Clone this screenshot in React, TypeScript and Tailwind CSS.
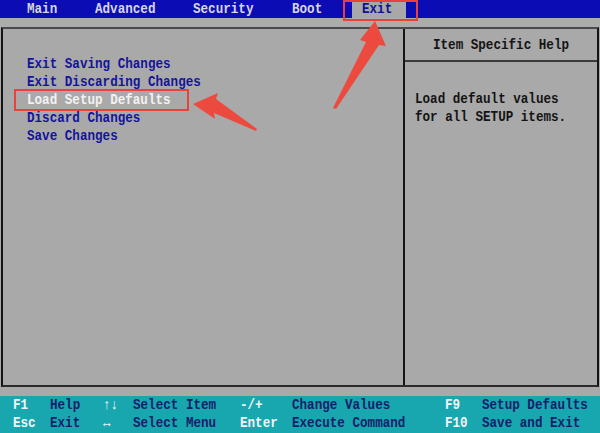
const mono = { fontFamily: '"Liberation Mono", "DejaVu Sans Mono", monospace' }

function T({ children, className = '' }: { children: React.ReactNode; className?: string }) {
    return <span className={`inline-block origin-center scale-y-[1.15] whitespace-pre ${className}`}>{children}</span>
}

const tabs = [
    { label: 'Main', w: 'w-[68px]' },
    { label: 'Advanced', w: 'w-[98px]' },
    { label: 'Security', w: 'w-[99px]' },
    { label: 'Boot', w: 'w-[60px]' },
]

const items = ['Exit Saving Changes', 'Exit Discarding Changes', 'Load Setup Defaults', 'Discard Changes', 'Save Changes']

const keys = [
    ['F1', 'Help', '↑↓', 'Select Item', '-/+', 'Change Values', 'F9', 'Setup Defaults'],
    ['Esc', 'Exit', '↔', 'Select Menu', 'Enter', 'Execute Command', 'F10', 'Save and Exit'],
]

export default function App() {
    return (
        <div className="relative w-[600px] h-[433px] bg-[#a9a9a9] flex flex-col overflow-hidden font-bold text-[12.6px] leading-[18px]" style={mono}>
            {/* menu bar */}
            <div className="h-[18px] shrink-0 bg-[#0c0cb4] flex items-stretch pl-[27px] text-[#d6d6e6]">
                {tabs.map((t) => (
                    <div key={t.label} className={`${t.w} shrink-0 flex items-center pt-[2px]`}><T>{t.label}</T></div>
                ))}
                <div className="shrink-0 bg-[#a8a8a8] pl-[10px] pr-[14px] text-[#101090] flex items-center pt-[2px]"><T>Exit</T></div>
            </div>

            <div className="h-[9px] shrink-0 bg-[#acacac]" />

            {/* main frame */}
            <div className="mx-[1px] h-[360px] shrink-0 flex border-t-2 border-t-[#4a4a4a] border-x-2 border-x-[#151515] border-b-2 border-b-[#2a2a2a]">
                <div className="w-[400px] pt-[27px] pl-[24px] flex flex-col text-[#14149a]">
                    {items.map((it) => (
                        <div key={it} className={it === 'Load Setup Defaults' ? 'text-[#f2f2f2]' : ''}><T>{it}</T></div>
                    ))}
                </div>
                <div className="w-[2px] bg-[#151515]" />
                <div className="flex-1 flex flex-col text-[#141414]">
                    <div className="h-[33px] flex items-center justify-center border-b-2 border-[#3a3a3a] pt-[3px]">
                        <T>Item Specific Help</T>
                    </div>
                    <div className="pt-[29px] pl-[10px] flex flex-col">
                        <T>Load default values</T>
                        <T>for all SETUP items.</T>
                    </div>
                </div>
            </div>

            <div className="flex-1" />

            {/* key help bar */}
            <div className="h-[37px] shrink-0 bg-[#18a7af] pl-[13px] pt-[1px] flex flex-col justify-center">
                {keys.map((row, i) => (
                    <div key={i} className="grid grid-cols-[37px_53px_30px_107px_52px_153px_37px_1fr]">
                        {row.map((c, j) => (
                            <div key={j} className={j % 2 === 0 ? 'text-[#f4f4f4]' : 'text-[#13206a]'}><T>{c}</T></div>
                        ))}
                    </div>
                ))}
            </div>

            {/* red annotations */}
            <div className="absolute left-[343px] top-0 w-[75px] h-[21px] border-2 border-[#e8433a]" />
            <div className="absolute left-[14px] top-[89px] w-[175px] h-[22px] border-2 border-[#e8433a]" />
            <svg className="absolute inset-0 pointer-events-none" width="600" height="433" viewBox="0 0 600 433">
                <polygon points="333,108 366,42 360,40 375,21 386,46 379,45 336,109" fill="#ec4a3e" />
                <polygon points="256,131 214,113 215,119 193,104 218,93 216,99 257,129" fill="#ec4a3e" />
            </svg>
        </div>
    )
}
